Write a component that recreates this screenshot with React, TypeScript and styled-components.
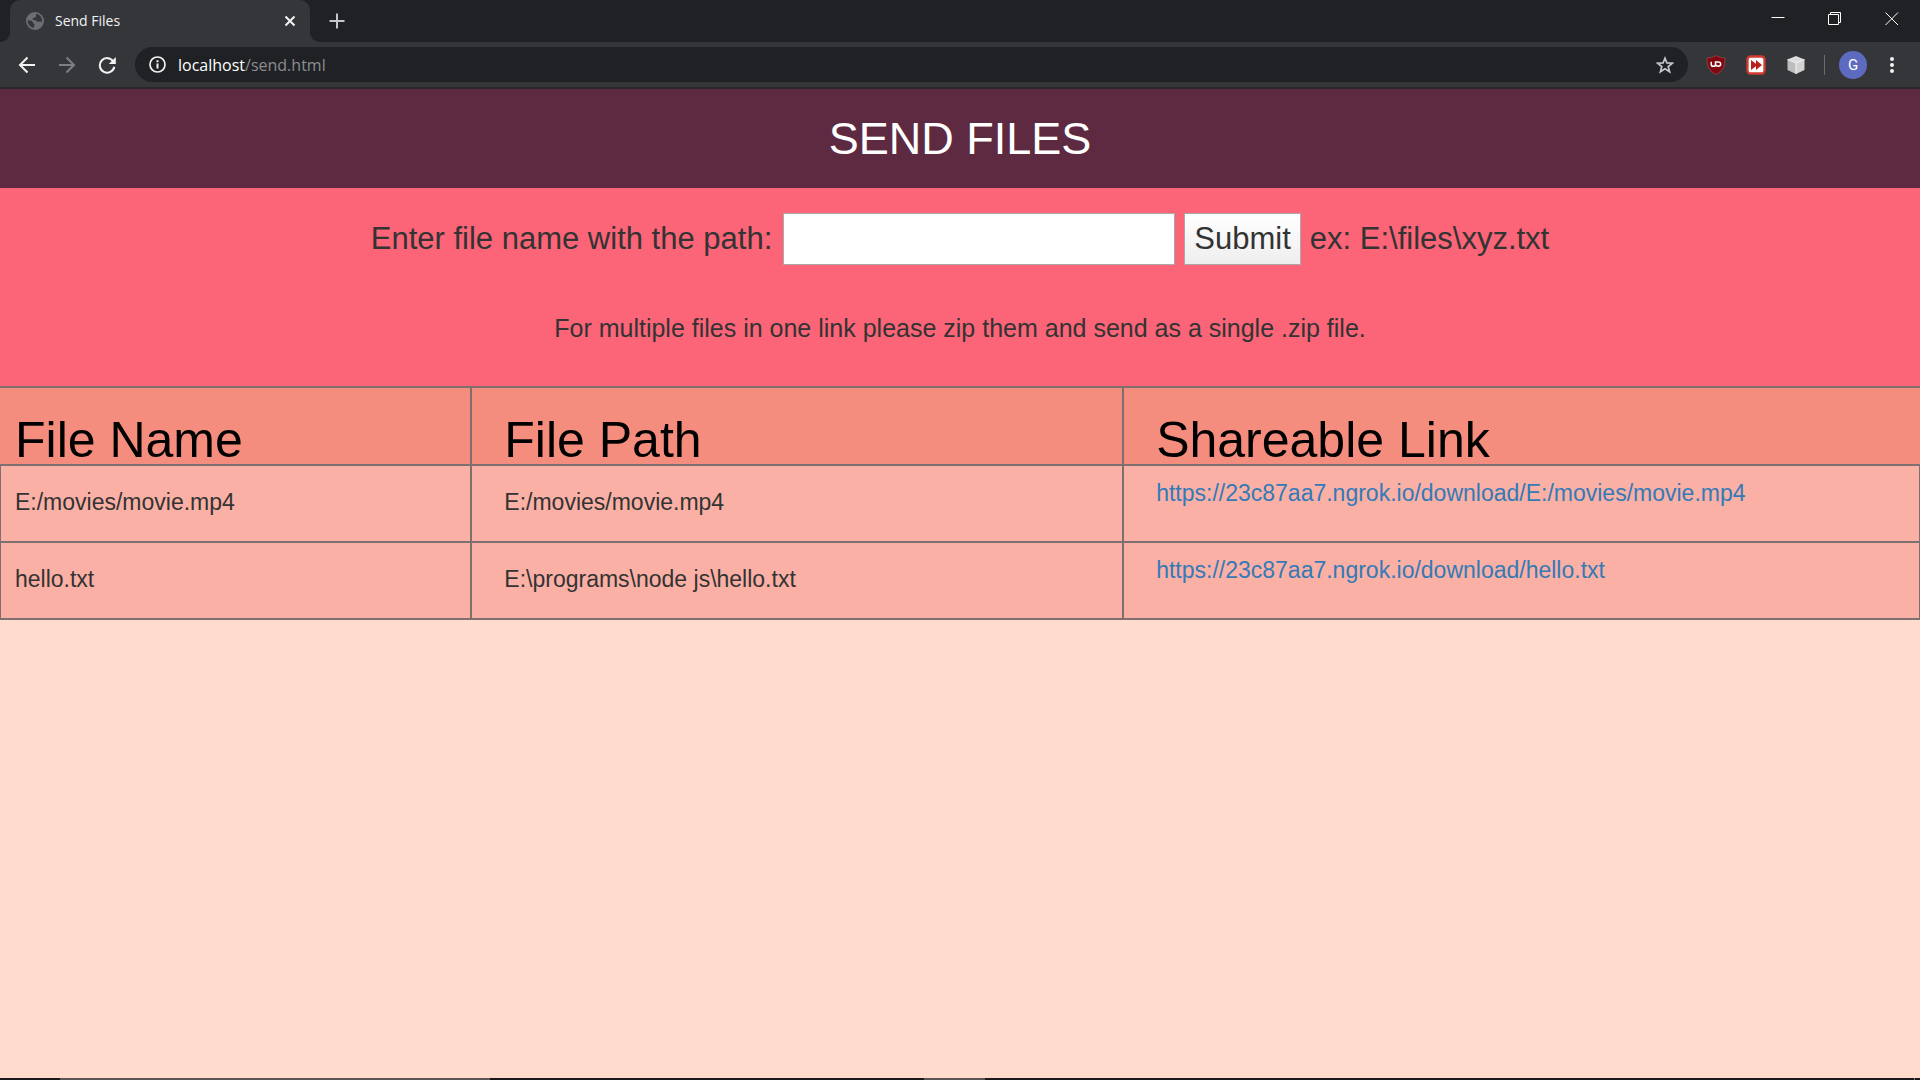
import React from 'react';
import styled, { createGlobalStyle } from 'styled-components';

const uiFont = '"Open Sans", "Noto Sans", sans-serif';
const pageFont = '"Liberation Sans", Arial, Helvetica, sans-serif';
const line = '#7f6f6e';

const GlobalStyle = createGlobalStyle`
  *, *::before, *::after { box-sizing: border-box; }
  body { margin: 0; background: #fedbcd; }
  button, input { font: inherit; margin: 0; }
`;

const Window = styled.div`
  min-height: 100vh;
  display: flex;
  flex-direction: column;
  font-family: ${pageFont};
`;

const TabStrip = styled.header`
  height: 42px;
  display: flex;
  align-items: stretch;
  padding-left: 10px;
  background: #202124;
`;

const Tab = styled.div`
  position: relative;
  width: 300px;
  display: flex;
  align-items: center;
  gap: 11px;
  padding: 0 14px 0 16px;
  border-radius: 10px 10px 0 0;
  background: #35363a;
  color: #f1f3f4;
  font: 14px/20px ${uiFont};

  &::before, &::after {
    content: '';
    position: absolute;
    bottom: 0;
    width: 10px;
    height: 10px;
  }
  &::before {
    left: -10px;
    background: radial-gradient(circle at 0 0, transparent 10px, #35363a 10px);
  }
  &::after {
    right: -10px;
    background: radial-gradient(circle at 100% 0, transparent 10px, #35363a 10px);
  }
`;

const TabTitle = styled.span`
  flex: 1;
`;

const IconButton = styled.button<{ $size?: number; $color?: string }>`
  flex: none;
  width: ${(p) => p.$size ?? 40}px;
  height: ${(p) => p.$size ?? 40}px;
  padding: 0;
  border: 0;
  display: flex;
  align-items: center;
  justify-content: center;
  background: none;
  color: ${(p) => p.$color ?? '#f1f3f4'};
`;

const NewTab = styled(IconButton)`
  align-self: center;
  margin-left: 14px;
`;

const WindowControls = styled.div`
  margin-left: auto;
  display: flex;
`;

const WindowButton = styled(IconButton)`
  width: 57px;
  height: 38px;
  color: #fff;
`;

const Toolbar = styled.div`
  height: 47px;
  display: flex;
  align-items: center;
  padding: 0 8px 0 7px;
  border-bottom: 2px solid #282828;
  background: #35363a;
`;

const AddressBar = styled.div`
  flex: 1;
  height: 35px;
  display: flex;
  align-items: center;
  gap: 12px;
  margin-left: 8px;
  padding: 0 3px 0 14px;
  border-radius: 18px;
  background: #202124;
  color: #8b8d90;
  font: 16px/24px ${uiFont};
`;

const Address = styled.span`
  flex: 1;
  b { font-weight: 400; color: #fff; }
`;

const Extensions = styled.div`
  display: flex;
  align-items: center;
  margin-left: 8px;
`;

const Divider = styled.span`
  width: 1px;
  height: 20px;
  margin: 0 14px 0 8px;
  background: #6a6b6e;
`;

const Avatar = styled.button`
  width: 28px;
  height: 28px;
  margin-right: 5px;
  padding: 0;
  border: 0;
  border-radius: 50%;
  background: #5c6bc0;
  color: #fff;
  font: 15px/28px Roboto, sans-serif;
`;

const Page = styled.main`
  flex: 1;
`;

const Banner = styled.h1`
  margin: 0;
  padding: 24px 0;
  background: #5e2a41;
  color: #fff;
  font-size: 45px;
  line-height: 51px;
  font-weight: 400;
  text-align: center;
`;

const SendForm = styled.form`
  padding: 25px 0 40px;
  background: #fc6477;
  color: #333;
  text-align: center;
`;

const PathRow = styled.div`
  display: flex;
  align-items: center;
  justify-content: center;
  gap: 9px;
  height: 52px;
  font-size: 31px;
`;

const PathLabel = styled.label`
  padding-right: 2px;
`;

const PathInput = styled.input`
  width: 392px;
  height: 52px;
  padding: 2px 8px;
  border: 1px solid #a9a9a9;
  background: #fff;
  color: #333;
`;

const SubmitButton = styled.button`
  height: 52px;
  padding: 0 9px;
  border: 1px solid #a9a9a9;
  background: linear-gradient(#fff, #eee);
  color: #333;
`;

const Note = styled.p`
  margin: 45px 0 0;
  font-size: 25px;
  line-height: 36px;
`;

const FileTable = styled.table`
  width: 100%;
  table-layout: fixed;
  border-collapse: separate;
  border-spacing: 0;
  border-top: 2px solid ${line};
  color: #333;
  font-size: 23px;
  line-height: 30px;
`;

const HeadCell = styled.th<{ $width?: string }>`
  width: ${(p) => p.$width ?? 'auto'};
  height: 78px;
  padding: 28px 0 0 32px;
  border: solid ${line};
  border-width: 0 2px 2px 0;
  background: #f58d7e;
  color: #000;
  font-size: 50px;
  line-height: 48px;
  font-weight: 400;
  text-align: left;
  &:first-child { padding-left: 15px; }
  &:last-child { border-right: 0; }
`;

const Cell = styled.td<{ $top?: number }>`
  height: 77px;
  padding: ${(p) => p.$top ?? 21}px 0 0 32px;
  border: solid ${line};
  border-width: 0 2px 2px 0;
  background: #fbb0a5;
  vertical-align: top;
  &:first-child { padding-left: 14px; border-left-width: 1px; }
  &:last-child { border-right-width: 1px; }
`;

const ShareLink = styled.a`
  color: #337ab7;
  text-decoration: none;
`;

const Taskbar = styled.footer`
  height: 2px;
  display: flex;
  padding-right: 5px;
  background: #1b181b;
`;

const TaskSlot = styled.span<{ $width: string; $open?: boolean }>`
  width: ${(p) => p.$width};
  background: ${(p) => (p.$open ? '#5a5656' : 'transparent')};
`;

const DesktopEdge = styled.span`
  width: 1px;
  margin-left: auto;
  background: #7a7777;
`;

const files = [
  { name: 'E:/movies/movie.mp4', path: 'E:/movies/movie.mp4', link: 'https://23c87aa7.ngrok.io/download/E:/movies/movie.mp4' },
  { name: 'hello.txt', path: 'E:\\programs\\node js\\hello.txt', link: 'https://23c87aa7.ngrok.io/download/hello.txt' },
];

const GlobeIcon = () => (
  <svg width="18" height="18" viewBox="0 0 18 18" aria-hidden="true">
    <circle cx="9" cy="9" r="9" fill="#6b6f74" />
    <path d="M10.5 1.8C9 3 11 4 9.3 5.2 8 6 6.5 5.6 6.6 7.2c.1 1.4 3.6.5 4.3 2 .5 1 2 .6 3 .2 1 0 1.7.5 2.1.6A7.3 7.3 0 0 0 10.5 1.8ZM1.7 8.3c2.3.2 5 .6 5.2 2.3.1 1.3 1.8 1 1.7 2.4-.1 1.1-1 1.6-1 3A7.3 7.3 0 0 1 1.7 8.3Z" fill="#35363a" />
  </svg>
);

const Stroke = ({ d, size = 18, width = 2 }: { d: string; size?: number; width?: number }) => (
  <svg width={size} height={size} viewBox={`0 0 ${size} ${size}`} fill="none" stroke="currentColor" strokeWidth={width} aria-hidden="true">
    <path d={d} />
  </svg>
);

const ReloadIcon = () => (
  <svg width="18" height="18" viewBox="0 0 18 18" aria-hidden="true">
    <path d="M15.3 5.5A7.3 7.3 0 1 0 16.3 10.8" fill="none" stroke="currentColor" strokeWidth="2" />
    <path d="M17.8 1v7h-7Z" fill="currentColor" />
  </svg>
);

const InfoIcon = () => (
  <svg width="17" height="17" viewBox="0 0 17 17" aria-hidden="true">
    <circle cx="8.5" cy="8.5" r="7.5" fill="none" stroke="#f1f3f4" strokeWidth="1.7" />
    <path d="M7.5 4.2h2v2h-2ZM7.5 7.6h2v5h-2Z" fill="#f1f3f4" />
  </svg>
);

const StarIcon = () => (
  <svg width="18" height="18" viewBox="0 0 18 18" aria-hidden="true">
    <path d="M9 2.2 10.9 6.9 16.4 7.2 12.2 10.5 13.6 15.8 9 12.8 4.4 15.8 5.8 10.5 1.6 7.2 7.1 6.9Z" fill="none" stroke="#c4c7ca" strokeWidth="1.7" />
  </svg>
);

const ShieldIcon = () => (
  <svg width="20" height="20" viewBox="0 0 20 20" aria-hidden="true">
    <path d="M10 .5c2.8 1.7 5.5 2.3 9 2.5 0 8-1.5 12.5-9 16.5C2.5 15.5 1 11 1 3 4.5 2.8 7.2 2.2 10 .5Z" fill="#800610" stroke="#a34a50" strokeWidth=".7" />
    <path d="M5.2 6.8v2.6c0 2.4 4.3 2.4 4.3 0v-2.5h2.800c3.200 0 3.200 4.300 0 4.300-1.600 0-2.800-.8-2.800-2.200" fill="none" stroke="#fff" strokeWidth="1.5" />
  </svg>
);

const ForwardIcon = () => (
  <svg width="20" height="20" viewBox="0 0 20 20" aria-hidden="true">
    <rect x="1.5" y="1.5" width="17" height="17" rx="3" fill="#fff" stroke="#d33b31" strokeWidth="2.3" />
    <path d="M5 5l5 3.8V5l6 5-6 5v-3.8L5 15Z" fill="#b91f1f" />
  </svg>
);

const CubeIcon = () => (
  <svg width="20" height="20" viewBox="0 0 20 20" aria-hidden="true">
    <path d="M10 1 18.5 4.5 10 8 1.5 4.5Z" fill="#dcdcdc" />
    <path d="M1.5 4.5 10 8v11L1.5 15Z" fill="#bdbdbd" />
    <path d="M18.5 4.5 10 8v11l8.5-4Z" fill="#d2d2d2" />
    <path d="M10 8v11M1.5 4.5 10 8l8.5-3.5" stroke="#f4f4f4" strokeWidth="1" fill="none" />
  </svg>
);

const DotsIcon = () => (
  <svg width="4" height="18" viewBox="0 0 4 18" fill="currentColor" aria-hidden="true">
    <circle cx="2" cy="3" r="2" /><circle cx="2" cy="9" r="2" /><circle cx="2" cy="15" r="2" />
  </svg>
);

export default function App() {
  return (
    <Window>
      <GlobalStyle />
      <TabStrip>
        <Tab>
          <GlobeIcon />
          <TabTitle>Send Files</TabTitle>
          <IconButton $size={12} aria-label="Close tab"><Stroke size={12} d="M1.5 1.5l9 9M10.5 1.5l-9 9" /></IconButton>
        </Tab>
        <NewTab $size={26} $color="#c4c7ca" aria-label="New tab"><Stroke size={16} d="M8 .5v15M.5 8h15" /></NewTab>
        <WindowControls>
          <WindowButton aria-label="Minimize"><Stroke size={14} width={1} d="M.5 5.5h13" /></WindowButton>
          <WindowButton aria-label="Restore"><Stroke size={14} width={1} d="M.5 2.5h10v10H.5ZM2.5 2.5v-2h10v10h-2" /></WindowButton>
          <WindowButton aria-label="Close"><Stroke size={14} width={1} d="M.5.5l12.5 12.5M13 .5L.5 13" /></WindowButton>
        </WindowControls>
      </TabStrip>
      <Toolbar>
        <IconButton aria-label="Back"><Stroke d="M17 9H2M9.5 1.5L2 9l7.5 7.5" /></IconButton>
        <IconButton $color="#7d7f82" aria-label="Forward"><Stroke d="M1 9h15M8.5 1.5L16 9l-7.5 7.5" /></IconButton>
        <IconButton aria-label="Reload"><ReloadIcon /></IconButton>
        <AddressBar>
          <InfoIcon />
          <Address><b>localhost</b>/send.html</Address>
          <IconButton aria-label="Bookmark"><StarIcon /></IconButton>
        </AddressBar>
        <Extensions>
          <IconButton aria-label="Content blocker"><ShieldIcon /></IconButton>
          <IconButton aria-label="Fast forward"><ForwardIcon /></IconButton>
          <IconButton aria-label="Cube extension"><CubeIcon /></IconButton>
          <Divider />
          <Avatar>G</Avatar>
          <IconButton aria-label="Menu"><DotsIcon /></IconButton>
        </Extensions>
      </Toolbar>
      <Page>
        <Banner>SEND FILES</Banner>
        <SendForm onSubmit={(e) => e.preventDefault()}>
          <PathRow>
            <PathLabel htmlFor="path">Enter file name with the path:</PathLabel>
            <PathInput id="path" type="text" />
            <SubmitButton type="submit">Submit</SubmitButton>
            <span>ex: E:\files\xyz.txt</span>
          </PathRow>
          <Note>For multiple files in one link please zip them and send as a single .zip file.</Note>
        </SendForm>
        <FileTable>
          <thead>
            <tr>
              <HeadCell $width="24.6%">File Name</HeadCell>
              <HeadCell $width="33.95%">File Path</HeadCell>
              <HeadCell>Shareable Link</HeadCell>
            </tr>
          </thead>
          <tbody>
            {files.map((f) => (
              <tr key={f.name}>
                <Cell>{f.name}</Cell>
                <Cell>{f.path}</Cell>
                <Cell $top={12}><ShareLink href={f.link}>{f.link}</ShareLink></Cell>
              </tr>
            ))}
          </tbody>
        </FileTable>
      </Page>
      <Taskbar>
        <TaskSlot $width="60px" />
        <TaskSlot $width="430px" $open />
        <TaskSlot $width="434px" />
        <TaskSlot $width="61px" $open />
        <DesktopEdge />
      </Taskbar>
    </Window>
  );
}
